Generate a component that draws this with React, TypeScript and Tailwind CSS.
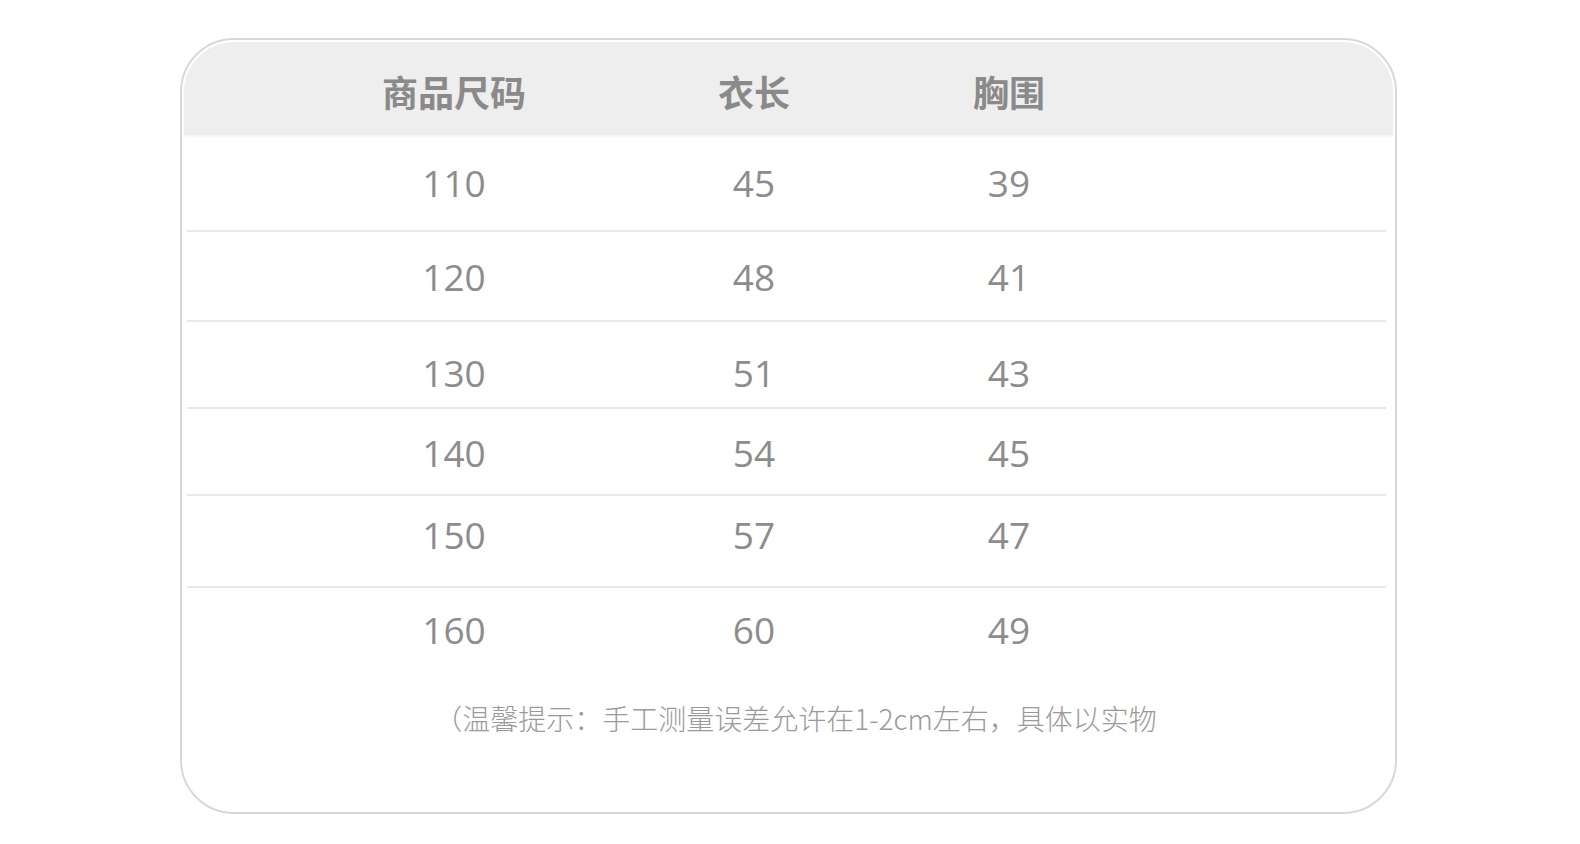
export default function App() {
  const rows = [
    { size: "110", len: "45", chest: "39", h: "h-[95px]", pt: "pt-[28px]" },
    { size: "120", len: "48", chest: "41", h: "h-[88px]", pt: "pt-[25px]" },
    { size: "130", len: "51", chest: "43", h: "h-[85px]", pt: "pt-[31px]" },
    { size: "140", len: "54", chest: "45", h: "h-[85px]", pt: "pt-[24px]" },
    { size: "150", len: "57", chest: "47", h: "h-[90px]", pt: "pt-[19px]" },
    { size: "160", len: "60", chest: "49", h: "h-[86px]", pt: "pt-[22px]" },
  ];

  return (
    <div className="min-h-screen bg-white pt-[38px] pl-[180px]">
      <div className="w-[1217px] h-[776px] rounded-[54px] border-2 border-[#d8d8d8] p-[2px] flex flex-col">
        {/* header */}
        <div className="h-[93px] rounded-t-[50px] bg-[#eeeeee] shadow-[0_2px_2px_rgba(0,0,0,0.04)] pt-[29px] pl-[120px] flex font-['Noto_Sans_CJK_SC',sans-serif] font-bold text-[36px] leading-[40px] text-[#8a8a8a]">
          <div className="w-[300px] text-center">商品尺码</div>
          <div className="w-[300px] text-center">衣长</div>
          <div className="w-[210px] text-center">胸围</div>
        </div>

        {rows.map((r, i) => (
          <div key={r.size}>
            <div className={`${r.h} ${r.pt} pl-[120px] flex font-['Open_Sans',sans-serif] text-[37px] leading-[40px] text-[#8c8c8c]`}>
              <div className="w-[300px] text-center">{r.size}</div>
              <div className="w-[300px] text-center">{r.len}</div>
              <div className="w-[210px] text-center">{r.chest}</div>
            </div>
            {i < rows.length - 1 && <div className="h-[2px] ml-[3px] mr-[7px] bg-[#e8e8e8]" />}
          </div>
        ))}

        {/* note */}
        <div className="pt-[28px] pl-[14px] text-center font-['Noto_Sans_CJK_SC',sans-serif] font-light text-[28px] leading-[32px] text-[#9a9a9a]">
          （温馨提示：手工测量误差允许在1-2cm左右，具体以实物
        </div>
      </div>
    </div>
  );
}
